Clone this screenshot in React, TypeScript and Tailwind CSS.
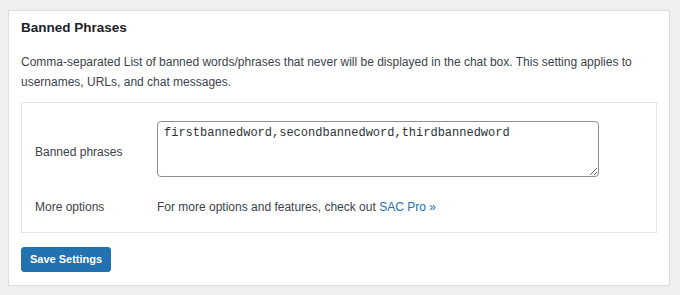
export default function App() {
  return (
    <div className="min-h-[295px] w-[680px] bg-[#f0f0f1] pt-[10px] pl-[8px] text-[#3c434a]" style={{ fontFamily: '"Liberation Sans", Arial, sans-serif' }}>
      <div className="w-[662px] h-[276px] border border-[#dcdcde] bg-white px-[12px] pt-[7px]">
        <h2 className="text-[13.5px] font-semibold leading-[20px] text-[#1d2327]">Banned Phrases</h2>
        <p className="mt-[14px] w-[635px] text-[12px] leading-[20px]">
          Comma-separated List of banned words/phrases that never will be displayed in the chat box. This setting applies to usernames, URLs, and chat messages.
        </p>
        <div className="mt-[10px] w-[636px] border border-[#e2e4e7] text-[12px]">
          <div className="flex items-start pt-[18px]">
            <div className="mt-[22px] w-[135px] pl-[13px] leading-[18px]">Banned phrases</div>
            <textarea
              readOnly
              defaultValue="firstbannedword,secondbannedword,thirdbannedword"
              className="h-[56px] w-[442px] resize-y rounded-[4px] border border-[#8c8f94] px-[6px] pt-[2px] text-[12px] leading-[18px] text-[#2c3338] outline-none"
              style={{ fontFamily: '"Liberation Mono", "DejaVu Sans Mono", monospace' }}
            />
          </div>
          <div className="flex items-start pt-[21px] pb-[16px] leading-[18px]">
            <div className="w-[135px] pl-[13px]">More options</div>
            <div>
              For more options and features, check out <a href="#" className="text-[#2271b1]">SAC Pro »</a>
            </div>
          </div>
        </div>
        <button className="mt-[14px] h-[25px] rounded-[3px] border border-[#2271b1] bg-[#2271b1] px-[8px] text-[11px] font-bold leading-[23px] text-white">
          Save Settings
        </button>
      </div>
    </div>
  );
}
